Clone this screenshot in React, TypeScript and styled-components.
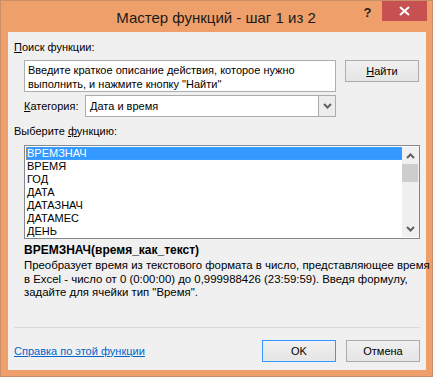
import React from "react";
import styled, { createGlobalStyle } from "styled-components";

const GlobalStyle = createGlobalStyle`
  html, body {
    margin: 0;
    padding: 0;
    background: #ffffff;
  }
  body {
    font-family: "Liberation Sans", Arial, sans-serif;
    font-size: 11px;
    color: #000;
  }
  * { box-sizing: border-box; }
`;

const FRAME = "#EFA06A";

const Window = styled.div`
  width: 433px;
  height: 377px;
  background: ${FRAME};
  border: 1px solid #c98f66;
  display: flex;
  flex-direction: column;
  padding: 0 6px 6px 7px;
`;

const TitleBar = styled.div`
  height: 31px;
  margin: 0 -6px 0 -7px;
  display: grid;
  grid-template-columns: 1fr auto 1fr;
  align-items: start;
  padding-right: 5px;
`;

const Title = styled.div`
  grid-column: 2;
  padding-top: 7px;
  padding-left: 4px;
  font-family: "Liberation Sans", Arial, sans-serif;
  font-size: 15px;
  line-height: 19px;
  color: #1a1a1a;
  white-space: nowrap;
`;

const Controls = styled.div`
  grid-column: 3;
  justify-self: end;
  display: flex;
  align-items: flex-start;
`;

const HelpButton = styled.div`
  width: 29px;
  height: 20px;
  display: flex;
  align-items: center;
  justify-content: center;
  font-weight: bold;
  font-size: 13px;
  color: #1e1e1e;
  padding-top: 3px;
`;

const CloseButton = styled.div`
  width: 45px;
  height: 20px;
  background: #c75050;
  display: flex;
  align-items: center;
  justify-content: center;
`;

const Client = styled.div`
  flex: 1;
  background: #f0f0f0;
  display: flex;
  flex-direction: column;
  padding: 8px 6px 8px 6px;
`;

const Label = styled.div<{ $mt?: number }>`
  height: 15px;
  line-height: 15px;
  margin-top: ${(p) => p.$mt ?? 0}px;
  white-space: nowrap;
`;

const Row = styled.div<{ $mt: number; $align?: string }>`
  display: flex;
  align-items: ${(p) => p.$align ?? "flex-start"};
  margin-top: ${(p) => p.$mt}px;
  padding-left: 10px;
`;

const SearchBox = styled.div`
  width: 312px;
  height: 32px;
  background: #fff;
  border: 1px solid #abadb3;
  padding: 2px 3px;
  line-height: 14px;
  white-space: nowrap;
`;

const Button = styled.div<{ $default?: boolean }>`
  width: 74px;
  height: 22px;
  border: 1px solid ${(p) => (p.$default ? "#3399ff" : "#acacac")};
  background: linear-gradient(#f0f0f0, #e5e5e5);
  display: flex;
  align-items: center;
  justify-content: center;
  line-height: 15px;
  color: #000;
`;

const FindButton = styled(Button)`
  margin-left: 9px;
`;

const CategoryLabel = styled.div`
  width: 61px;
  line-height: 15px;
`;

const Combo = styled.div`
  width: 251px;
  height: 22px;
  background: #fff;
  border: 1px solid #acacac;
  display: flex;
  align-items: stretch;
`;

const ComboText = styled.div`
  flex: 1;
  padding-left: 4px;
  line-height: 20px;
`;

const ComboArrow = styled.div`
  width: 17px;
  background: #ececec;
  border-left: 1px solid #acacac;
  display: flex;
  align-items: center;
  justify-content: center;
`;

const ListBox = styled.div`
  margin-top: 6px;
  margin-left: 10px;
  width: 396px;
  height: 94px;
  background: #fff;
  border: 1px solid #828790;
  display: flex;
  padding: 1px 0 1px 1px;
`;

const Items = styled.div`
  flex: 1;
  display: flex;
  flex-direction: column;
`;

const Item = styled.div<{ $selected?: boolean }>`
  height: 13px;
  line-height: 13px;
  padding-left: 1px;
  white-space: nowrap;
  background: ${(p) => (p.$selected ? "#3399ff" : "transparent")};
  color: ${(p) => (p.$selected ? "#fff" : "#000")};
  outline: ${(p) => (p.$selected ? "1px dotted #d08040" : "none")};
  outline-offset: -1px;
`;

const ScrollBar = styled.div`
  width: 17px;
  background: #f0f0f0;
  display: flex;
  flex-direction: column;
`;

const ScrollArrow = styled.div`
  height: 17px;
  display: flex;
  align-items: center;
  justify-content: center;
`;

const Thumb = styled.div`
  height: 18px;
  margin: 0 1px 0 0;
  background: #cdcdcd;
`;

const Track = styled.div`
  flex: 1;
`;

const Signature = styled.div`
  margin-top: 4px;
  margin-left: 10px;
  font-weight: bold;
  font-size: 12px;
  line-height: 15px;
`;

const Description = styled.div`
  margin-top: 1px;
  margin-left: 10px;
  font-size: 11.4px;
  line-height: 13.5px;
  white-space: nowrap;
`;

const Separator = styled.div`
  margin-top: auto;
  height: 1px;
  background: #dadada;
  margin-bottom: 12px;
`;

const BottomRow = styled.div`
  display: flex;
  align-items: center;
  gap: 10px;
`;

const HelpLink = styled.a`
  color: #0066cc;
  text-decoration: underline;
  margin-right: auto;
  line-height: 15px;
  cursor: pointer;
`;

const Chevron = ({ up }: { up?: boolean }) => (
  <svg width="9" height="6" viewBox="0 0 9 6">
    <polyline
      points={up ? "1,5 4.5,1.5 8,5" : "1,1 4.5,4.5 8,1"}
      fill="none"
      stroke="#606060"
      strokeWidth="2"
    />
  </svg>
);

const items = ["ВРЕМЗНАЧ", "ВРЕМЯ", "ГОД", "ДАТА", "ДАТАЗНАЧ", "ДАТАМЕС", "ДЕНЬ"];

export default function App() {
  return (
    <>
      <GlobalStyle />
      <Window>
        <TitleBar>
          <Title>Мастер функций - шаг 1 из 2</Title>
          <Controls>
            <HelpButton>?</HelpButton>
            <CloseButton>
              <svg width="11" height="10" viewBox="0 0 11 10">
                <path d="M1 1 L10 9 M10 1 L1 9" stroke="#fff" strokeWidth="2" />
              </svg>
            </CloseButton>
          </Controls>
        </TitleBar>
        <Client>
          <Label>
            <u>П</u>оиск функции:
          </Label>
          <Row $mt={5}>
            <SearchBox>
              Введите краткое описание действия, которое нужно
              <br />
              выполнить, и нажмите кнопку "Найти"
            </SearchBox>
            <FindButton>
              <u>Н</u>айти
            </FindButton>
          </Row>
          <Row $mt={3} $align="center">
            <CategoryLabel>
              <u>К</u>атегория:
            </CategoryLabel>
            <Combo>
              <ComboText>Дата и время</ComboText>
              <ComboArrow>
                <Chevron />
              </ComboArrow>
            </Combo>
          </Row>
          <Label $mt={7}>
            Выберите <u>ф</u>ункцию:
          </Label>
          <ListBox>
            <Items>
              {items.map((it, i) => (
                <Item key={it} $selected={i === 0}>
                  {it}
                </Item>
              ))}
            </Items>
            <ScrollBar>
              <ScrollArrow>
                <Chevron up />
              </ScrollArrow>
              <Thumb />
              <Track />
              <ScrollArrow>
                <Chevron />
              </ScrollArrow>
            </ScrollBar>
          </ListBox>
          <Signature>ВРЕМЗНАЧ(время_как_текст)</Signature>
          <Description>
            Преобразует время из текстового формата в число, представляющее время
            <br />
            в Excel - число от 0 (0:00:00) до 0,999988426 (23:59:59). Введя формулу,
            <br />
            задайте для ячейки тип "Время".
          </Description>
          <Separator />
          <BottomRow>
            <HelpLink>Справка по этой функции</HelpLink>
            <Button $default>OK</Button>
            <Button>Отмена</Button>
          </BottomRow>
        </Client>
      </Window>
    </>
  );
}
